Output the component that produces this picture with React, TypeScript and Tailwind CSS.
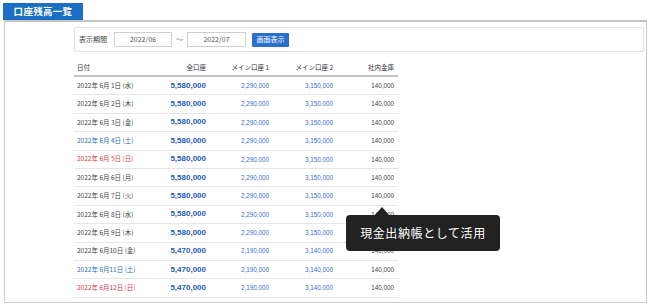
import React from 'react';

type Row = {
  day: number;
  dow: string;
  total: string;
  main1: string;
  main2: string;
  safe: string;
};

const DOWS = ['水', '木', '金', '土', '日', '月', '火', '水', '木', '金', '土', '日'];

const rows: Row[] = DOWS.map((dow, i) => {
  const day = i + 1;
  const early = day < 10;
  return {
    day,
    dow,
    total: early ? '5,580,000' : '5,470,000',
    main1: early ? '2,290,000' : '2,190,000',
    main2: early ? '3,150,000' : '3,140,000',
    safe: '140,000',
  };
});

const dateColor = (dow: string) => {
  if (dow === '土') return 'text-[#2f6dbd]';
  if (dow === '日') return 'text-[#d23a3f]';
  return 'text-[#444]';
};

const gridCols = 'grid grid-cols-[82px_54px_63px_64px_61px]';

const App: React.FC = () => {
  return (
    <div className="relative w-[650px] h-[305px] bg-white px-[3px] pt-[3px] font-['Liberation_Sans','Noto_Sans_CJK_JP',sans-serif]">
      {/* tab */}
      <div className="w-[80px] h-[17px] bg-[#1a6fc4] flex items-center justify-center">
        <span className="text-white text-[9.5px] font-bold tracking-[0.3px] font-['Noto_Sans_CJK_JP',sans-serif]">口座残高一覧</span>
      </div>

      {/* panel */}
      <div className="ml-[1px] w-[643px] h-[283px] border-t-2 border-t-[#c4c4c4] border-x border-b border-[#cdcdcd]">
        {/* filter */}
        <div className="mt-[5px] ml-[69px] mr-[2px] h-[25px] border border-[#e0e0e0] rounded-[2px] flex items-center px-[4px] gap-[6px] text-[7px] text-[#444] font-['Noto_Sans_CJK_JP',sans-serif]">
          <span className="mr-[1px]">表示期間</span>
          <div className="w-[58px] h-[15px] border border-[#cfcfcf] flex items-center justify-center text-[#555]">2022/06</div>
          <span className="-mx-[2px] text-[#777]">〜</span>
          <div className="w-[59px] h-[15px] border border-[#cfcfcf] flex items-center justify-center text-[#555]">2022/07</div>
          <button className="w-[37px] h-[14px] bg-[#2b6fcc] rounded-[1px] text-white text-[7px] flex items-center justify-center">画面表示</button>
        </div>

        {/* table */}
        <div className="mt-[8px] ml-[69px] w-[324px] text-[#444]">
          <div className={`${gridCols} h-[17px] items-center border-b-2 border-[#c4c4c4] text-[6.5px] font-['Noto_Sans_CJK_JP',sans-serif] text-[#333]`}>
            <div className="pl-[3px]">日付</div>
            <div className="text-right pr-[4px]">全口座</div>
            <div className="text-right pr-[4px]">メイン口座 1</div>
            <div className="text-right pr-[4px]">メイン口座 2</div>
            <div className="text-right pr-[4px]">社内金庫</div>
          </div>
          {rows.map((r) => (
            <div key={r.day} className={`${gridCols} h-[18.4px] items-center border-b border-[#e6e6e6]`}>
              <div className={`pl-[3px] text-[6.5px] whitespace-pre font-['Noto_Sans_CJK_JP',sans-serif] ${dateColor(r.dow)}`}>
                {`2022年 6月${r.day < 10 ? ' ' : ''}${r.day}日 (${r.dow})`}
              </div>
              <div className="text-right pr-[4px] text-[8px] font-bold text-[#1f5cb8]">{r.total}</div>
              <div className="text-right pr-[4px] text-[6.3px] text-[#3c70c4]">{r.main1}</div>
              <div className="text-right pr-[4px] text-[6.3px] text-[#3c70c4]">{r.main2}</div>
              <div className="text-right pr-[4px] text-[6.3px] text-[#444]">{r.safe}</div>
            </div>
          ))}
        </div>
      </div>

      {/* tooltip */}
      <div className="absolute left-[346px] top-[207px]">
        <div className="ml-[29px] w-0 h-0 border-x-[7px] border-x-transparent border-b-[8px] border-b-[#222]" />
        <div className="w-[154px] h-[36px] bg-[#222] rounded-[4px] flex items-center justify-center">
          <span className="text-white text-[12px] tracking-[0.6px] font-['Noto_Sans_CJK_JP',sans-serif]">現金出納帳として活用</span>
        </div>
      </div>
    </div>
  );
};

export default App;
